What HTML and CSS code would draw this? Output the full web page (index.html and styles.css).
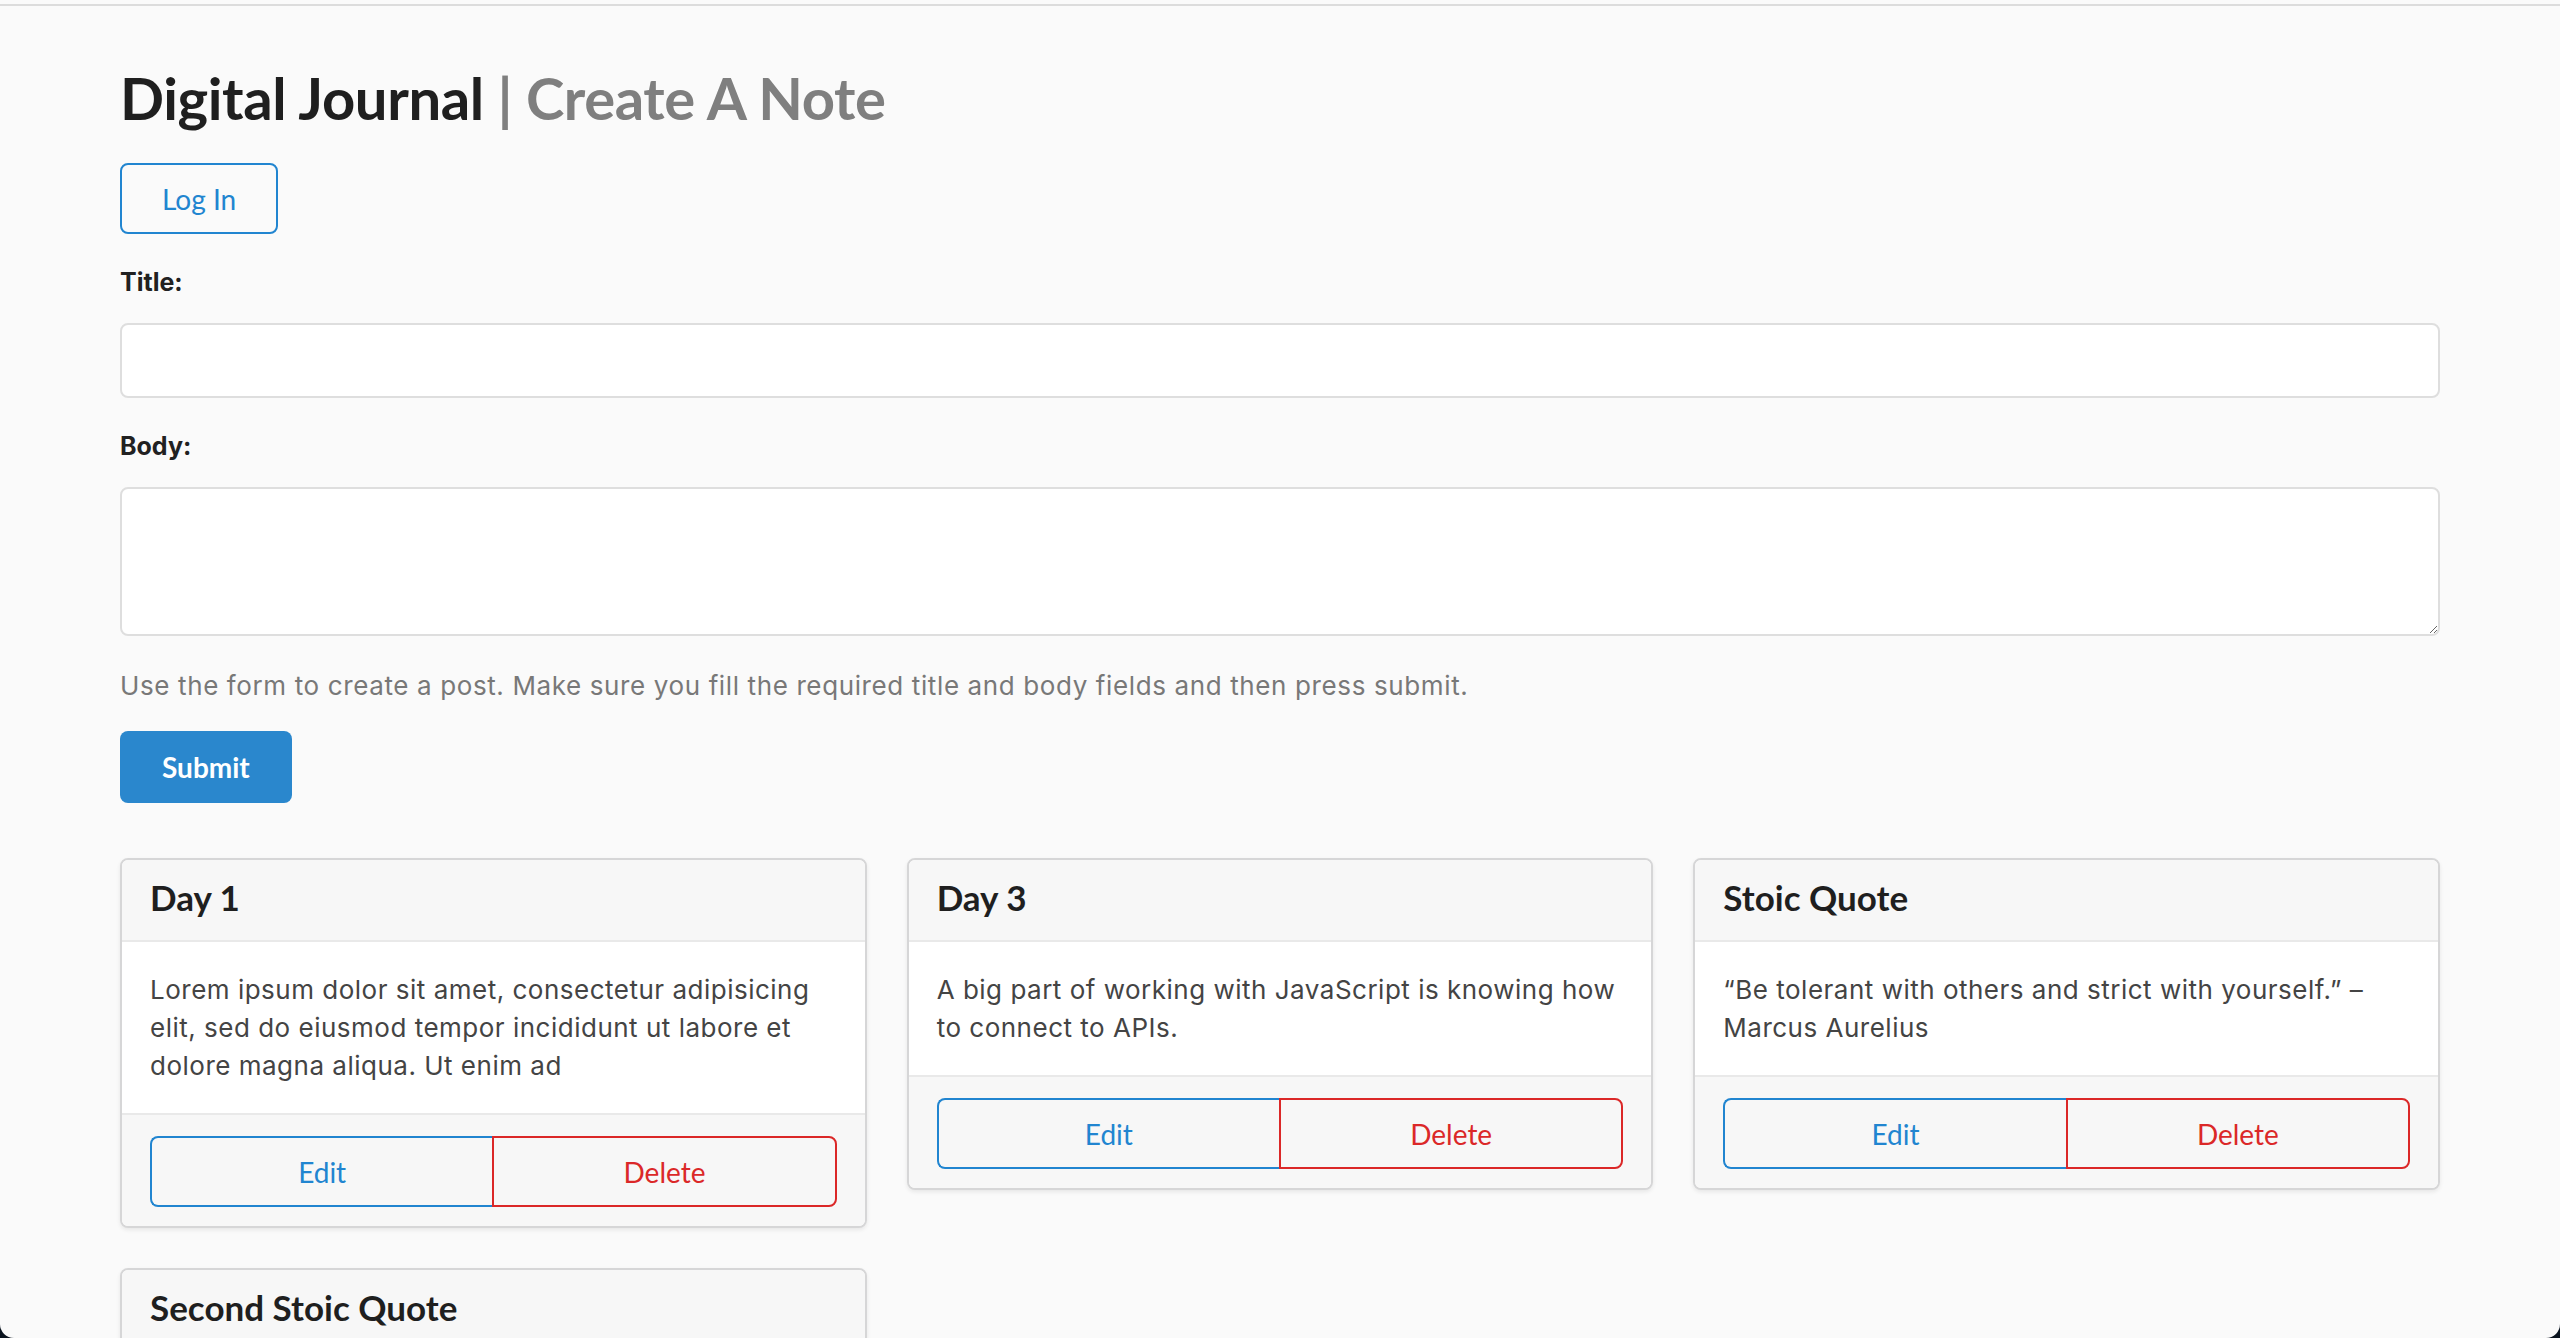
FILE: index.html
```html
<!DOCTYPE html>
<html lang="en">
<head>
<meta charset="utf-8">
<title>Digital Journal | Create A Note</title>
<link rel="stylesheet" href="styles.css">
</head>
<body>
<div class="window">
  <div class="chrome-line"></div>
  <main class="page">
    <h1 class="page-title">Digital Journal <span class="page-subtitle">| Create A Note</span></h1>
    <button class="btn btn-outline-blue login-btn" type="button">Log In</button>

    <form class="note-form">
      <div class="field">
        <label class="field-label" for="title">Title:</label>
        <input class="field-input" id="title" type="text">
      </div>
      <div class="field">
        <label class="field-label" for="body">Body:</label>
        <textarea class="field-textarea" id="body"></textarea>
      </div>
      <p class="help-text">Use the form to create a post. Make sure you fill the required title and body fields and then press submit.</p>
      <button class="btn btn-primary" type="button">Submit</button>
    </form>

    <section class="cards">
      <article class="card">
        <header class="card-header">Day 1</header>
        <div class="card-body">Lorem ipsum dolor sit amet, consectetur adipisicing elit, sed do eiusmod tempor incididunt ut labore et dolore magna aliqua. Ut enim ad</div>
        <footer class="card-footer">
          <div class="btn-group">
            <button class="group-btn group-edit" type="button">Edit</button>
            <button class="group-btn group-delete" type="button">Delete</button>
          </div>
        </footer>
      </article>
      <article class="card">
        <header class="card-header">Day 3</header>
        <div class="card-body">A big part of working with JavaScript is knowing how to connect to APIs.</div>
        <footer class="card-footer">
          <div class="btn-group">
            <button class="group-btn group-edit" type="button">Edit</button>
            <button class="group-btn group-delete" type="button">Delete</button>
          </div>
        </footer>
      </article>
      <article class="card">
        <header class="card-header">Stoic Quote</header>
        <div class="card-body">“Be tolerant with others and strict with yourself.” – Marcus Aurelius</div>
        <footer class="card-footer">
          <div class="btn-group">
            <button class="group-btn group-edit" type="button">Edit</button>
            <button class="group-btn group-delete" type="button">Delete</button>
          </div>
        </footer>
      </article>
      <article class="card">
        <header class="card-header">Second Stoic Quote</header>
        <div class="card-body">“Waste no more time arguing about what a good man should be. Be one.” – Marcus Aurelius</div>
        <footer class="card-footer">
          <div class="btn-group">
            <button class="group-btn group-edit" type="button">Edit</button>
            <button class="group-btn group-delete" type="button">Delete</button>
          </div>
        </footer>
      </article>
    </section>
  </main>
</div>
</body>
</html>
```

FILE: styles.css
```css
html {
  background: #0c1520;
}
body {
  margin: 0;
  font-family: Lato, "Noto Sans", sans-serif;
}
.window {
  box-sizing: border-box;
  height: 1338px;
  overflow: hidden;
  background: #fafafa;
  border-radius: 0 0 14px 14px;
  padding-top: 4px;
}
.chrome-line {
  height: 2px;
  background: #dcdcdc;
}
.page {
  padding: 0 120px;
}
.page-title {
  margin: 57px 0 0;
  font-family: Lato, sans-serif;
  font-weight: 700;
  font-size: 58px;
  line-height: 70px;
  color: #1f1f1f;
  letter-spacing: -0.4px;
}
.page-subtitle {
  color: #7f7f7f;
}
.btn {
  box-sizing: border-box;
  font-family: Lato, sans-serif;
  font-size: 28px;
  border-radius: 8px;
  cursor: pointer;
  display: block;
}
.btn-outline-blue {
  height: 71px;
  padding: 0 40px;
  background: transparent;
  color: #2185d0;
  border: 2px solid #2185d0;
}
.login-btn {
  margin-top: 30px;
}
.note-form {
  display: flex;
  flex-direction: column;
}
.field {
  display: flex;
  flex-direction: column;
  margin-top: 33px;
}
.field-label {
  font-family: Inter, "Noto Sans", sans-serif;
  font-weight: 700;
  font-size: 25px;
  line-height: 30px;
  color: #212121;
  margin-bottom: 26px;
}
.field-input,
.field-textarea {
  box-sizing: border-box;
  width: 100%;
  border: 2px solid #dedede;
  border-radius: 8px;
  background: #fff;
  font-family: Lato, sans-serif;
  font-size: 28px;
  margin: 0;
}
.field-input {
  height: 75px;
}
.field-textarea {
  height: 149px;
  display: block;
  resize: vertical;
}
.help-text {
  margin: 35px 0 0;
  font-family: Inter, "Noto Sans", sans-serif;
  font-size: 26px;
  letter-spacing: 0.62px;
  line-height: 30px;
  color: #787878;
}
.btn-primary {
  align-self: flex-start;
  margin-top: 30px;
  height: 72px;
  padding: 0 42px;
  border: none;
  background: #2a87cd;
  color: #fff;
  font-weight: 700;
}
.cards {
  display: grid;
  grid-template-columns: repeat(3, 1fr);
  column-gap: 40px;
  row-gap: 40px;
  align-items: start;
  margin-top: 55px;
}
.card {
  border: 2px solid #d6d6d7;
  border-radius: 8px;
  box-shadow: 0 2px 4px rgba(0, 0, 0, 0.08);
  background: #fff;
  overflow: hidden;
}
.card-header {
  background: #f7f7f7;
  padding: 15px 28px 21px;
  font-weight: 700;
  font-size: 35px;
  line-height: 44px;
  color: #1f1f1f;
  border-bottom: 2px solid #e9e9e9;
}
.card-body {
  padding: 29px 28px 28px;
  font-family: Inter, "Noto Sans", sans-serif;
  font-size: 26px;
  letter-spacing: 0.5px;
  line-height: 38px;
  color: #444;
  background: #fff;
}
.card-footer {
  background: #f7f7f7;
  border-top: 2px solid #e9e9e9;
  padding: 21px 28px 19px;
}
.btn-group {
  display: flex;
}
.group-btn {
  flex: 1;
  box-sizing: border-box;
  height: 71px;
  background: transparent;
  font-family: Lato, sans-serif;
  font-size: 28px;
  cursor: pointer;
  margin: 0;
}
.group-edit {
  color: #2185d0;
  border: 2px solid #2185d0;
  border-right: none;
  border-radius: 8px 0 0 8px;
}
.group-delete {
  color: #db2828;
  border: 2px solid #db2828;
  border-radius: 0 8px 8px 0;
}
```
